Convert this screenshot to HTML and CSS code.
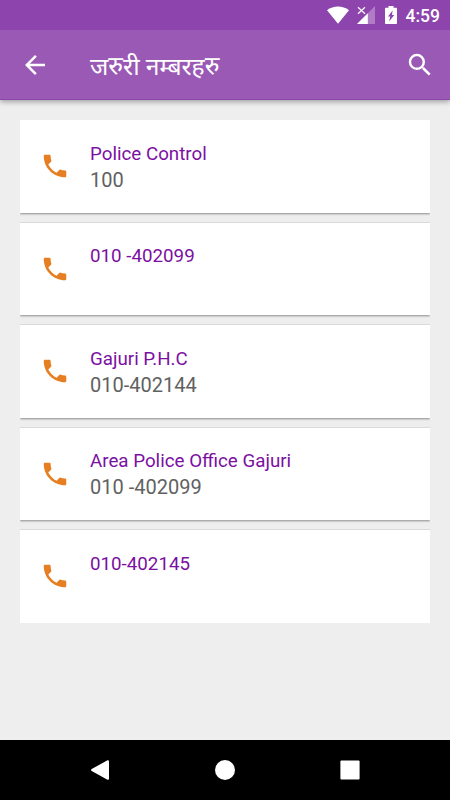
FILE: index.html
```html
<!DOCTYPE html>
<html lang="ne">
<head>
<meta charset="utf-8">
<title>जरुरी नम्बरहरु</title>
<link rel="stylesheet" href="styles.css">
</head>
<body>
<svg width="0" height="0" class="defs"><symbol id="phone" viewBox="0 0 24 24"><path d="M6.62 10.79c1.44 2.83 3.76 5.14 6.59 6.59l2.2-2.2c.27-.27.67-.36 1.02-.24 1.12.37 2.33.57 3.57.57.55 0 1 .45 1 1V20c0 .55-.45 1-1 1-9.39 0-17-7.61-17-17 0-.55.45-1 1-1h3.5c.55 0 1 .45 1 1 0 1.25.2 2.45.57 3.57.11.35.03.74-.25 1.02l-2.2 2.2z"/></symbol></svg>
<div class="status">
  <svg class="wifi" viewBox="0 0 22 18"><path d="M0 4.2C6.500-.8 15.500-.8 22 4.200L11 17.800z"/></svg>
  <svg class="signal" viewBox="0 0 18 18"><path class="dim" d="M18 0v18H0z"/><path d="M10.800 7.200V18H0z"/><path class="mask" d="M0 0h9v9H0z"/><path class="cross" d="M1 1.300l7 6.400M8 1.300L1 7.700"/></svg>
  <svg class="battery" viewBox="0 0 12 18"><path fill-rule="evenodd" d="M3.500 0h5v1.800H11c.6 0 1 .4 1 1V17c0 .6-.4 1-1 1H1c-.6 0-1-.4-1-1V2.800c0-.6.4-1 1-1h2.500zM7.600 4.400L3 10.500h2.300l-1.200 5L9.300 9H7z"/></svg>
  <span>4:59</span>
</div>
<header class="toolbar">
  <svg class="icon" viewBox="0 0 24 24"><path d="M20 11H7.830l5.590-5.590L12 4l-8 8 8 8 1.410-1.410L7.830 13H20v-2z"/></svg>
  <h1>जरुरी नम्बरहरु</h1>
  <svg class="icon" viewBox="0 0 24 24"><path d="M15.500 14h-.79l-.28-.27A6.471 6.471 0 0 0 16 9.500 6.500 6.500 0 1 0 9.500 16c1.610 0 3.090-.59 4.230-1.570l.27.28v.79l5 4.990L20.490 19l-4.990-5zm-6 0C7.010 14 5 11.990 5 9.500S7.010 5 9.500 5 14 7.010 14 9.500 11.990 14 9.500 14z"/></svg>
</header>
<main class="list">
  <div class="card"><svg class="phone"><use href="#phone"/></svg><div class="text"><div class="name">Police Control</div><div class="number">100</div></div></div>
  <div class="card"><svg class="phone"><use href="#phone"/></svg><div class="text"><div class="name">010 -402099</div></div></div>
  <div class="card"><svg class="phone"><use href="#phone"/></svg><div class="text"><div class="name">Gajuri P.H.C</div><div class="number">010-402144</div></div></div>
  <div class="card"><svg class="phone"><use href="#phone"/></svg><div class="text"><div class="name">Area Police Office Gajuri</div><div class="number">010 -402099</div></div></div>
  <div class="card"><svg class="phone"><use href="#phone"/></svg><div class="text"><div class="name">010-402145</div></div></div>
</main>
<nav class="navbar">
  <svg viewBox="0 0 20 20"><path d="M17.500.3Q19 0 19 1.500v17Q19 20 17.500 19.700L1.700 11Q.4 10 1.700 9z"/></svg>
  <svg viewBox="0 0 20 20"><circle cx="10" cy="10" r="10"/></svg>
  <svg viewBox="0 0 20 20"><rect x=".4" y=".4" width="19.200" height="19.200" rx="1"/></svg>
</nav>
</body>
</html>
```

FILE: styles.css
```css
* { box-sizing: border-box; }
body {
  margin: 0;
  height: 800px;
  display: flex;
  flex-direction: column;
  overflow: hidden;
  background: #eee;
  font-family: Roboto, "Noto Sans", sans-serif;
}
svg { display: block; flex: none; fill: #fff; }
.defs { position: absolute; }
.status {
  position: relative;
  z-index: 1;
  height: 30px;
  flex: none;
  display: flex;
  align-items: center;
  justify-content: flex-end;
  padding: 0 10px 0 0;
  background: #8e44ad;
  color: #fff;
  font-size: 17.5px;
  font-weight: 500;
}
.status span { padding-top: 1px; }
.wifi { width: 22px; height: 18px; margin-right: 8px; }
.signal { width: 18px; height: 18px; margin-right: 10px; }
.battery { width: 12px; height: 18px; margin-right: 9px; }
.dim { opacity: .3; }
.mask { fill: #8e44ad; }
.cross { fill: none; stroke: #fff; stroke-width: 1.2; }
.toolbar {
  position: relative;
  height: 70px;
  flex: none;
  display: flex;
  align-items: center;
  padding: 0 15px 0 20px;
  background: #9b59b6;
  border-bottom: 1px solid #8e44ad;
  box-shadow: 0 2px 5px rgba(0, 0, 0, .32);
}
.icon { width: 30px; height: 30px; }
h1 {
  flex: 1;
  margin: 0 0 0 40px;
  padding-top: 4px;
  color: #fff;
  font-size: 24.7px;
  font-weight: 400;
  line-height: 34px;
}
.list {
  width: 410px;
  height: 502.5px;
  margin: 20px auto 0;
  flex: none;
  display: flex;
  flex-direction: column;
  gap: 10px;
  overflow: hidden;
}
.card {
  height: 92.5px;
  flex: none;
  display: flex;
  align-items: center;
  padding-left: 20px;
  background: #fff;
  box-shadow: 0 1px 2px rgba(0, 0, 0, .42), 0 -1px 0 rgba(0, 0, 0, .05);
}
.phone { width: 30px; height: 30px; margin-right: 20px; fill: #e67e22; }
.text { align-self: flex-start; padding-top: 21.9px; white-space: nowrap; }
.name { color: #7b10a2; font-size: 18.75px; line-height: 25px; }
.number { color: #616161; font-size: 20px; line-height: 27px; }
.navbar {
  height: 60px;
  flex: none;
  display: flex;
  align-items: center;
  justify-content: center;
  gap: 105px;
  margin-top: auto;
  background: #000;
}
.navbar svg { width: 20px; height: 20px; }
```
